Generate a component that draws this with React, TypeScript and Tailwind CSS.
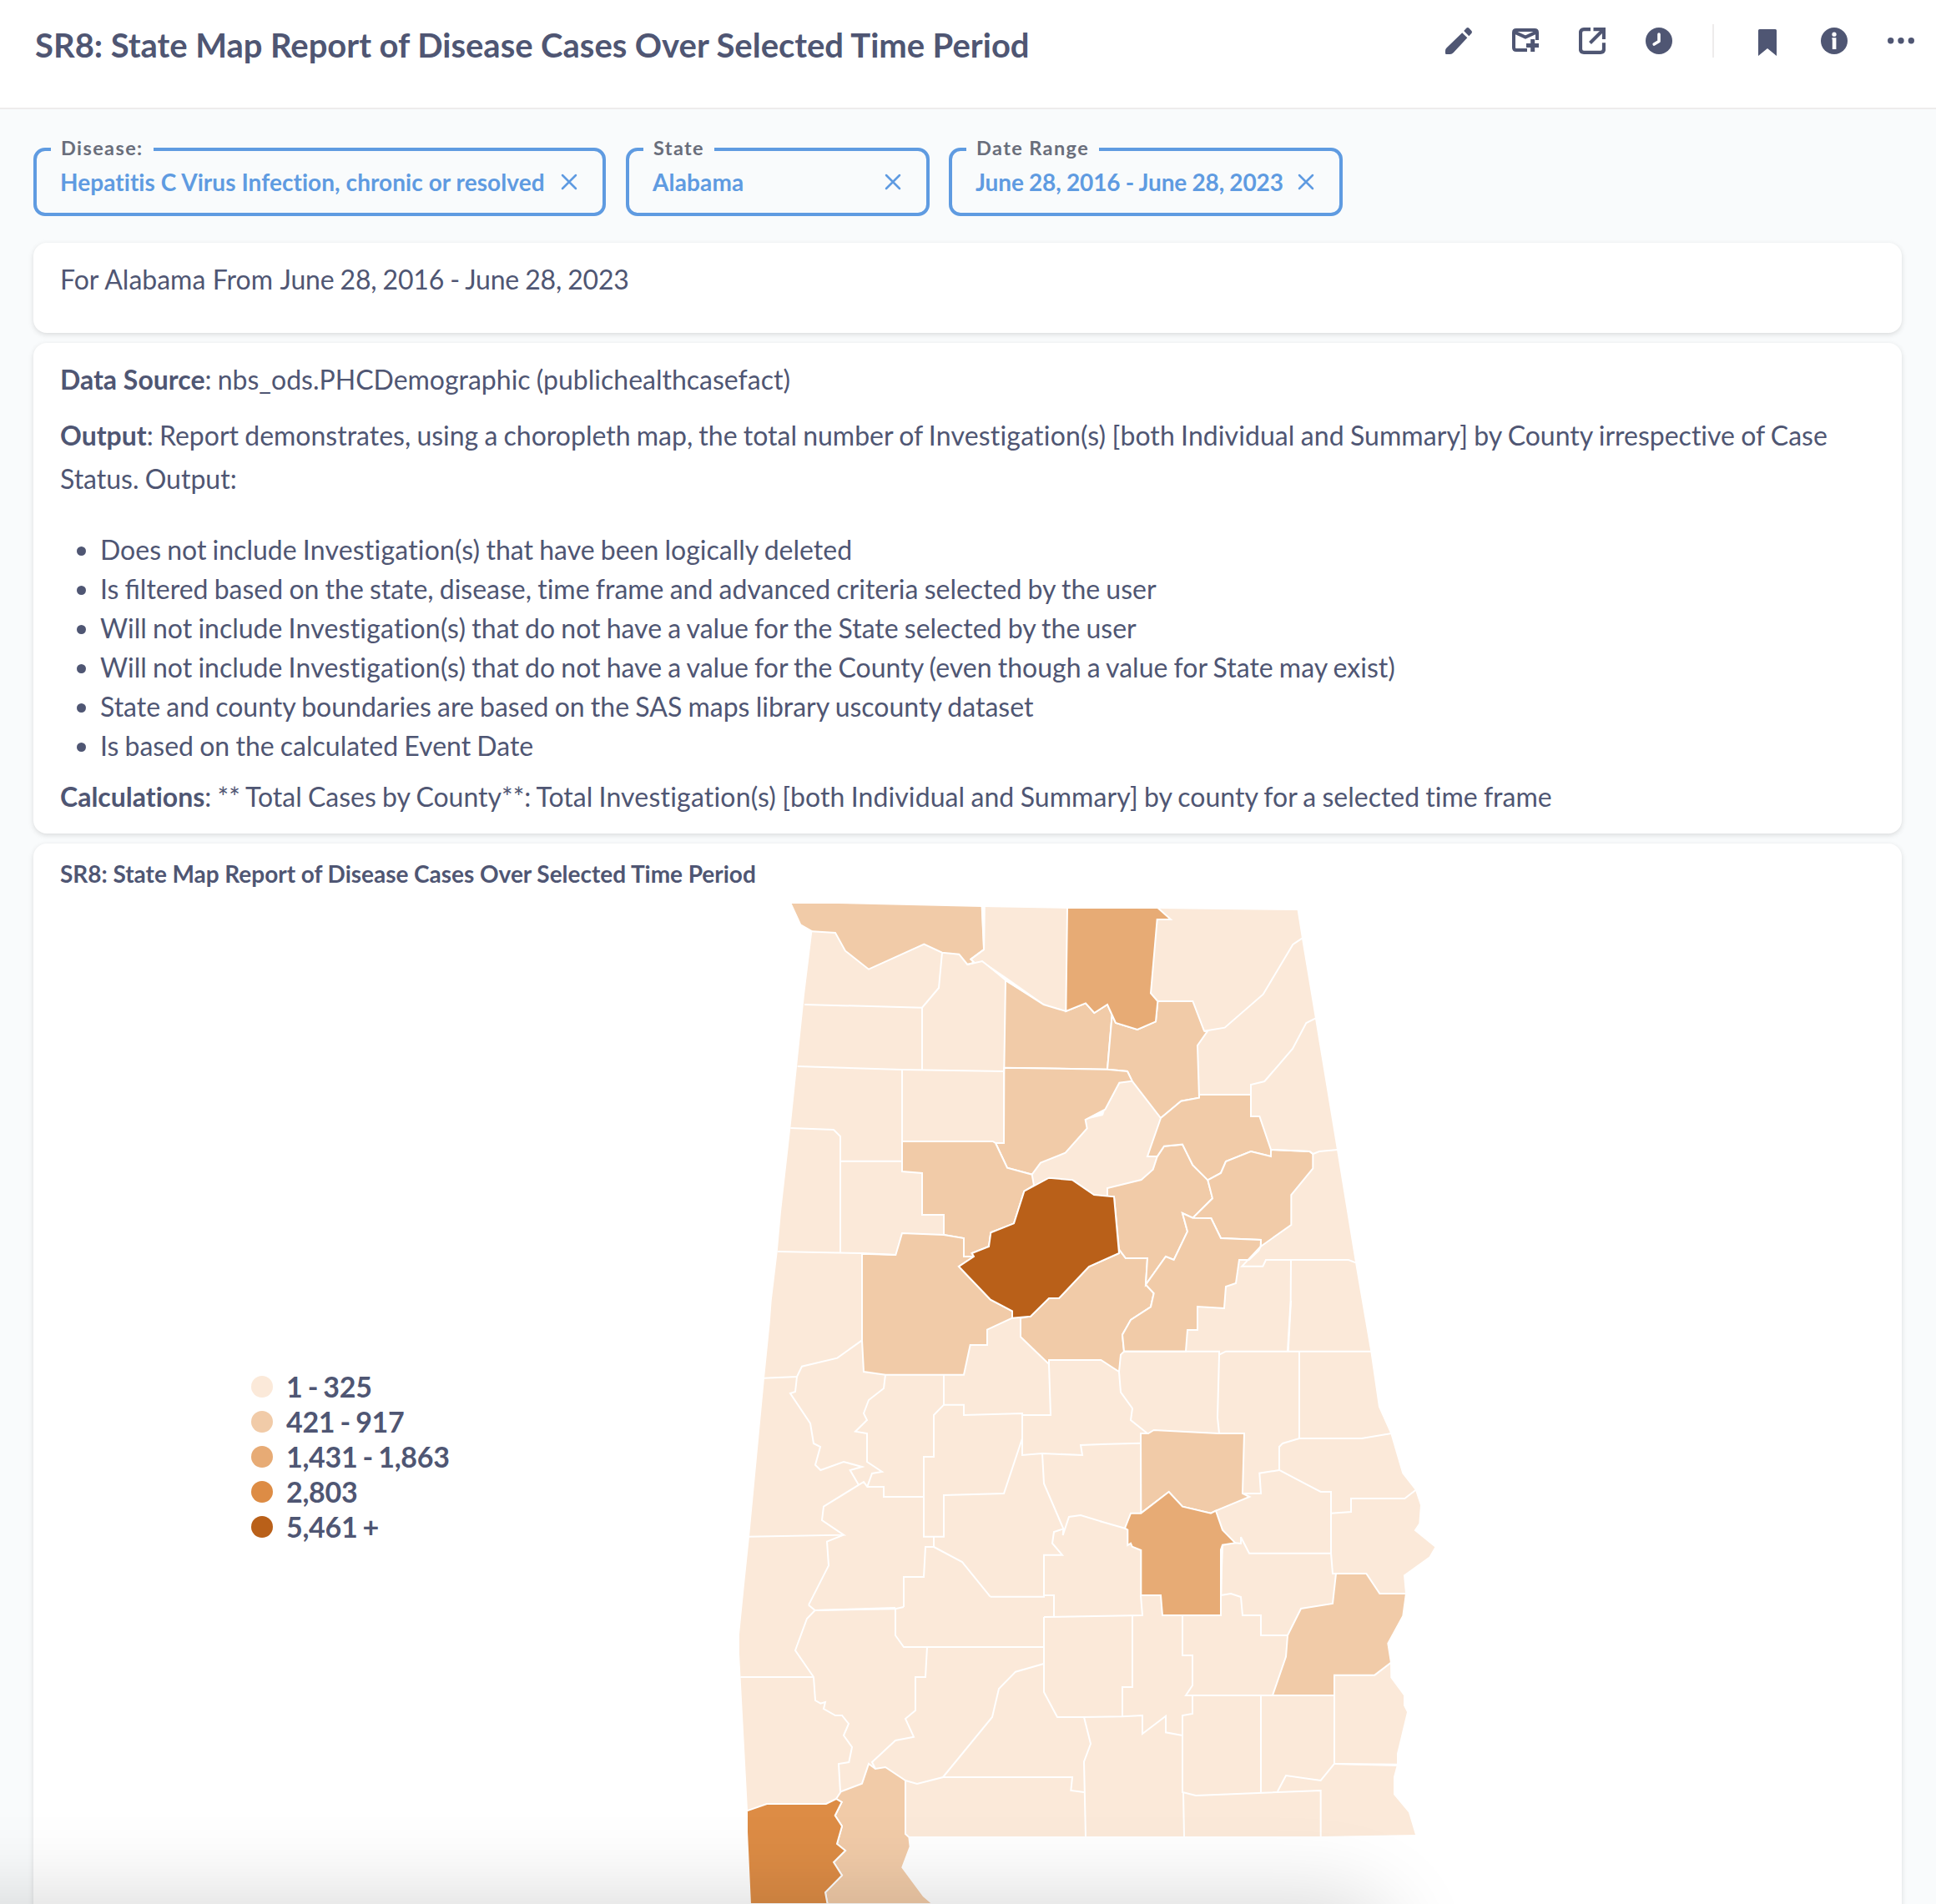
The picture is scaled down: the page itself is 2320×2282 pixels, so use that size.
import React from "react";

const INK = "#4f5673";

const C1 = "#fbe9d9";
const C2 = "#f1cba8";
const C3 = "#e7ab75";
const C4 = "#dd8c45";
const C5 = "#b96019";

/* ---------- map geometry ---------- */

const STATE =
  "236,71 405,72 920,84 1227,90 1552,90 2054,96 2070,197 2118,485 2196,957 2265,1380 2317,1682 2346,1882 2389,1978 2431,2121 2478,2181 2496,2235 2491,2300 2474,2326 2548,2386 2528,2420 2436,2486 2442,2552 2431,2632 2377,2732 2388,2801 2389,2855 2436,2919 2436,2955 2448,2979 2412,3128 2412,3165 2411,3172 2400,3212 2400,3275 2454,3340 2478,3420 2140,3426 656,3426 659,3463 631,3537 707,3640 740,3666 90,3666 78,3410 78,3332 54,2880 48,2770 48,2700 66,2520 84,2348 138,1778 158,1580 164,1500 185,1325 198,1180 234,860 282,400 310,172 270,146";

const COUNTIES: { name: string; fill: string; points: string }[] = [
  { name: "Lauderdale", fill: C2, points: "231,68 405,69 920,81 927,237 880,272 891,284 868,291 838,254 777,248 712,218 513,308 429,242 393,177 310,172 268,148" },
  { name: "Morgan", fill: C2, points: "1005,348 1142,435 1222,459 1293,430 1324,465 1371,435 1388,472 1371,668 1000,662" },
  { name: "Marshall", fill: C2, points: "1388,472 1401,501 1479,525 1545,496 1552,423 1678,423 1719,530 1730,532 1695,582 1701,770 1636,782 1563,843 1460,710 1443,675 1371,668" },
  { name: "Madison", fill: C3, points: "1227,87 1552,87 1599,129 1550,129 1527,394 1552,423 1545,496 1479,525 1401,501 1371,435 1324,465 1293,430 1222,459" },
  { name: "Cullman", fill: C2, points: "1000,662 1371,668 1443,675 1460,710 1414,716 1363,812 1292,849 1298,880 1220,968 1131,1004 1100,1046 1011,1022 969,933 999,933" },
  { name: "Walker", fill: C2, points: "633,927 959,927 969,933 1011,1022 1100,1046 1107,1085 1072,1106 1035,1222 952,1255 945,1305 884,1329 891,1341 855,1341 855,1275 783,1263 783,1191 705,1191 705,1041 633,1035" },
  { name: "Tuscaloosa", fill: C2, points: "633,1257 783,1263 855,1275 855,1341 891,1341 837,1377 951,1496 1029,1537 1029,1562 939,1604 939,1659 878,1659 855,1766 573,1766 495,1755 489,1642 489,1331 610,1335" },
  { name: "Shelby", fill: C2, points: "1413,1329 1305,1377 1197,1491 1161,1491 1095,1556 1059,1562 1059,1630 1161,1728 1161,1713 1348,1713 1413,1755 1419,1694 1431,1682 1425,1622 1455,1569 1527,1522 1538,1473 1509,1442 1515,1347 1437,1347 1413,1315" },
  { name: "St. Clair", fill: C2, points: "1371,1126 1371,1095 1493,1065 1535,1028 1550,982 1575,944 1641,938 1678,1012 1732,1066 1749,1132 1678,1202 1641,1185 1659,1251 1610,1353 1581,1341 1509,1442 1515,1347 1437,1347 1413,1315 1395,1126" },
  { name: "Etowah", fill: C2, points: "1563,843 1636,782 1701,770 1701,759 1887,759 1887,837 1918,837 1959,957 1959,981 1887,963 1797,999 1779,1041 1732,1066 1678,1012 1641,938 1575,944 1550,981 1515,981" },
  { name: "Calhoun", fill: C2, points: "1732,1066 1779,1041 1797,999 1887,963 1959,981 1959,957 2098,963 2110,972 2110,1024 2032,1119 2032,1227 1922,1305 1923,1281 1779,1275 1744,1203 1678,1202 1749,1132" },
  { name: "Talladega", fill: C2, points: "1641,1185 1678,1202 1744,1203 1779,1275 1923,1281 1922,1305 1915,1320 1880,1353 1845,1353 1833,1437 1797,1449 1791,1527 1695,1521 1695,1605 1659,1605 1653,1682 1431,1682 1425,1622 1455,1569 1527,1522 1538,1473 1509,1442 1581,1341 1610,1353 1659,1251" },
  { name: "Jefferson", fill: C5, points: "1161,1058 1246,1066 1323,1119 1395,1126 1413,1329 1305,1377 1197,1491 1161,1491 1095,1556 1029,1562 1029,1537 951,1496 837,1377 891,1341 884,1329 945,1305 952,1255 1035,1222 1072,1106" },
  { name: "Elmore", fill: C2, points: "1491,1977 1518,1977 1538,1965 1770,1977 1863,1977 1857,2193 1882,2205 1761,2255 1743,2264 1641,2240 1592,2187 1492,2264" },
  { name: "Montgomery", fill: C3, points: "1492,2264 1592,2187 1641,2240 1743,2264 1761,2255 1785,2324 1831,2371 1785,2378 1779,2395 1779,2631 1569,2631 1563,2559 1492,2559 1492,2397 1460,2384 1455,2372 1444,2379 1444,2324 1434,2318 1455,2264" },
  { name: "Barbour", fill: C2, points: "2193,2481 2302,2481 2350,2553 2445,2553 2434,2633 2380,2732 2391,2801 2332,2846 2187,2846 2187,2919 1965,2919 2013,2780 2019,2703 2067,2607 2181,2589" },
  { name: "Baldwin", fill: C2, points: "396,3291 413,3265 489,3236 513,3165 537,3183 573,3177 645,3225 645,3417 658,3429 662,3463 634,3537 710,3640 745,3670 365,3670 357,3627 417,3566 387,3519 429,3477 399,3453 417,3389 392,3351 416,3303" },
  { name: "Mobile", fill: C4, points: "75,3334 147,3309 360,3309 396,3291 416,3303 392,3351 417,3389 399,3453 429,3477 387,3519 417,3566 357,3627 365,3670 87,3670 75,3410" },
];

const BORDERS: { region: string; shift: string; lines: string[] }[] = [
  {
    region: "northwest",
    shift: "translate(30 0)",
    lines: [
      "252,435 675,446 735,375 747,248",
      "675,446 675,668",
      "227,657 603,669 969,675",
      "603,669 603,1035",
      "202,879 357,885 381,909 381,1326",
      "381,998 603,998",
      "155,1323 460,1329 580,1335",
      "970,662 969,675 969,933",
      "838,291 891,279 975,345",
      "899,84 897,237 850,272 864,285",
    ],
  },
  {
    region: "northeast",
    shift: "translate(1290 0)",
    lines: [
      "782,196 748,219 641,398 503,518 429,530",
      "830,484 796,501 747,594 646,711 597,723 597,759",
      "669,957 808,963 820,972 843,963 908,957",
      "632,1305 565,1376 640,1376 651,1353 948,1353 974,1363",
      "555,1353 590,1353",
    ],
  },
  {
    region: "west central",
    shift: "translate(30 1320)",
    lines: [
      "106,458 225,453 243,416 370,386 459,322",
      "225,453 219,507 201,513 273,621 285,693 309,705 291,770 310,789 393,759 459,777 416,789 447,842",
      "543,446 537,495 483,537 465,585 477,609 435,650 477,657 477,759 531,795 495,801 478,848",
      "52,1028 393,1022 315,969 321,920 465,831 478,849 537,849 537,885 681,885",
      "753,446 753,554 717,591 717,741 681,741 681,1028 753,1028 753,879 969,873 1035,675",
      "753,554 825,554 825,591 1035,585 1035,735 1107,729 1251,735 1245,699 1322,696",
      "1035,591 1137,591 1131,408",
      "1107,729 1113,837 1183,1000 1181,1023 1203,957 1245,951 1320,974",
      "1183,1000 1149,1011 1143,1052 1179,1094 1113,1094 1113,1243",
      "393,1022 333,1046 339,1132 267,1274",
      "717,1028 717,1065 687,1065 681,1173 609,1173 609,1281",
      "717,1065 819,1119 920,1244",
    ],
  },
  {
    region: "east central",
    shift: "translate(1290 1320)",
    lines: [
      "741,33 740,180 729,362",
      "741,180 731,362",
      "141,362 483,362 483,374 507,362 1029,362",
      "483,374 477,600 483,657",
      "771,362 771,675",
      "1102,657 995,675 771,675 711,693 699,705 699,789 848,867 885,867 885,1088 891,1161 903,1161",
      "699,789 628,800 633,873 567,873",
      "1190,860 1150,891 957,891 957,939 885,944",
      "123,435 129,509 171,567 165,609 225,657",
      "55,696 201,692",
      "541,1051 561,1053 561,1030 591,1088 885,1088",
      "55,973 144,998",
      "495,1058 492,1140",
    ],
  },
  {
    region: "southwest",
    shift: "translate(0 2460)",
    lines: [
      "297,134 320,153 609,148 639,141",
      "320,153 609,144",
      "320,153 291,183 249,297 315,393 321,477 340,488 357,483 351,507 393,531 417,531 441,561 423,603 453,645 442,699 405,705 411,806",
      "52,393 315,393",
      "609,148 609,243 639,285 1143,285",
      "723,285 717,393 681,393 681,513 645,543 675,608 609,621 525,699 537,723",
      "950,104 1143,104 1143,99 1179,99 1179,176",
      "1143,99 1143,104",
      "1143,177 1143,447 1191,537 1290,537",
      "1143,345 1041,374 981,435 957,537 780,753 687,777 645,765",
      "780,753 1245,753 1240,801 1287,807",
      "1287,537 1311,633 1287,697 1293,968",
    ],
  },
  {
    region: "southeast",
    shift: "translate(1290 2460)",
    lines: [
      "-147,177 207,171 201,99",
      "171,173 171,429 135,429 135,536",
      "-5,537 135,535 207,531 207,597 291,533 291,592 351,603",
      "351,171 351,315 387,315 387,423 363,459 675,459",
      "387,459 387,525 351,531 351,807 399,819 848,801 848,968",
      "354,807 357,968",
      "633,459 633,807",
      "897,459 897,705 848,765 723,747 693,804",
      "897,705 1125,707",
      "897,705 1125,711",
      "489,99 525,93 561,105 567,171 633,171 633,243 729,243",
      "492,0 490,99",
    ],
  },
];

/* Thin gaps between simplified county outlines */
const GAPS = [
  "919,82 930,82 929,237 926,237",
  "921,279 1008,338 1142,433 1005,350",
  "1295,847 1355,833 1361,813",
];

function AlabamaMap() {
  return (
    <svg width="866" height="1222" viewBox="0 0 2598 3666" className="block shrink-0">
      <polygon points={STATE} fill={C1} />
      {COUNTIES.map((c) => (
        <polygon key={c.name} points={c.points} fill={c.fill} stroke="#fff" strokeWidth="6" />
      ))}
      {BORDERS.map((b) => (
        <g key={b.region} transform={b.shift} fill="none" stroke="#fff" strokeWidth="6">
          {b.lines.map((l) => (
            <polyline key={l} points={l} />
          ))}
        </g>
      ))}
      {GAPS.map((g) => (
        <polygon key={g} points={g} fill="#fff" stroke="#fff" strokeWidth="2" />
      ))}
    </svg>
  );
}

/* ---------- header ---------- */

function HeaderIcons() {
  return (
    <div className="flex items-start pt-[33px] text-[#4f5673]">
      <svg width="32" height="32" viewBox="0 0 32 32" fill={INK}>
        <path d="M20.200 6.300 26.300 12.200 9.800 30Q8 32 5.800 32H1.200Q0 32 0 30.800V28Q0 26 1.400 24.600Z" />
        <path d="M22.200 4 25.200.800Q26.800-.600 28.400.800L31.200 3.800Q32.600 5.400 31.300 7L28.300 10.200Z" />
      </svg>
      <svg width="34" height="32" viewBox="0 0 34 32" className="ml-[47px]" fill="none" stroke={INK}>
        <path d="M31 15V6Q31 3 28 3H6Q3 3 3 6V24Q3 27 6 27H19" strokeWidth="4" />
        <path d="M3.500 5.400 17 11.600 30.500 5.400" strokeWidth="4" />
        <path d="M25.700 14V29M18 21.400H33" strokeWidth="5" />
      </svg>
      <svg width="32" height="32" viewBox="0 0 32 32" className="ml-[47px]" fill="none" stroke={INK}>
        <path d="M14 2.200H6Q2 2.200 2 6.200V25.800Q2 29.800 6 29.800H26Q30 29.800 30 25.800V18.200" strokeWidth="4.200" />
        <path d="M17.500 2.200H30V14" strokeWidth="4.200" />
        <path d="M13.500 18.500 28.500 3.500" strokeWidth="4" />
      </svg>
      <svg width="32" height="32" viewBox="0 0 32 32" className="ml-12">
        <circle cx="16" cy="16" r="16" fill={INK} />
        <path d="M16 8V16.500L10.200 20" fill="none" stroke="#fff" strokeWidth="3.600" strokeLinecap="round" strokeLinejoin="round" />
      </svg>
      <div className="-mt-1 ml-12 h-10 w-0.5 bg-[#eeecec]" />
      <svg width="22" height="34" viewBox="0 0 22 34" className="ml-[53px]" fill={INK}>
        <path d="M1.500 2H20.500Q22 2 22 3.500V34L11 25 0 34V3.500Q0 2 1.500 2Z" />
      </svg>
      <svg width="32" height="32" viewBox="0 0 32 32" className="ml-[53px]">
        <circle cx="16" cy="16" r="16" fill={INK} />
        <circle cx="16" cy="8.200" r="2.600" fill="#fff" />
        <path d="M13.400 12.200H18.400V26H13.800V14.200H13.400Z" fill="#fff" />
      </svg>
      <svg width="32" height="32" viewBox="0 0 32 32" className="ml-12" fill={INK}>
        <circle cx="3.700" cy="15.700" r="3.700" />
        <circle cx="16" cy="15.700" r="3.700" />
        <circle cx="28.300" cy="15.700" r="3.700" />
      </svg>
    </div>
  );
}

/* ---------- filters ---------- */

function Filter({ label, value, box, text }: { label: string; value: string; box: string; text: string }) {
  return (
    <div className={`relative h-[82px] rounded-[14px] border-4 border-[#5f9be1] pl-7 pr-[30px] ${box}`}>
      <div className="absolute -top-[17px] left-[17px] flex h-7 items-center bg-[#f9fbfc] px-3 text-[23.500px] font-bold tracking-[1.400px] text-[#696e7b]">
        {label}
      </div>
      <div className="flex h-[74px] items-center justify-between">
        <span className={`whitespace-nowrap text-[28px] font-bold leading-[34px] text-[#5f9be1] ${text}`}>{value}</span>
        <svg width="20" height="20" viewBox="0 0 20 20" className="shrink-0" stroke="#5f9be1" strokeWidth="2.500" strokeLinecap="round">
          <path d="M2 2 18 18M18 2 2 18" />
        </svg>
      </div>
    </div>
  );
}

const card = "rounded-2xl bg-white shadow-[0_2px_6px_rgba(0,0,0,0.13)]";

const Investigations = () => <span className="tracking-[0.200px]">Investigation(s)</span>;

const NOTES: React.ReactNode[] = [
  <>
    Does not include <Investigations /> that have been logically deleted
  </>,
  <>
    Is <span className="[font-variant-ligatures:normal]">filtered</span> based on the state, disease, time frame and
    advanced criteria selected by the user
  </>,
  <>
    Will not include <Investigations /> that do not have a value for the State selected by the user
  </>,
  <>
    Will not include <Investigations /> that do not have a value for the County (even though a value for State may
    exist)
  </>,
  "State and county boundaries are based on the SAS maps library uscounty dataset",
  "Is based on the calculated Event Date",
];

const LEGEND = [
  { dot: "bg-[#fbe9d9]", text: "1 - 325" },
  { dot: "bg-[#f1cba8]", text: "421 - 917" },
  { dot: "bg-[#e7ab75]", text: "1,431 - 1,863" },
  { dot: "bg-[#dd8c45]", text: "2,803" },
  { dot: "bg-[#b96019]", text: "5,461 +" },
];

export default function App() {
  return (
    <div className="relative h-[2282px] w-[2320px] overflow-hidden bg-[#f9fbfc] font-['Lato',sans-serif] text-[#4f5673] [font-variant-ligatures:none]">
      <header className="flex h-[131px] justify-between border-b-2 border-[#eeecec] bg-white pl-[42px] pr-[26px]">
        <h1 className="pt-[30px] text-[40px] font-bold leading-[48px] [word-spacing:-0.250px]">
          SR8: State Map Report of Disease Cases Over Selected Time Period
        </h1>
        <HeaderIcons />
      </header>

      <div className="flex pl-10 pt-[46px]">
        <Filter
          label="Disease:"
          value="Hepatitis C Virus Infection, chronic or resolved"
          box="w-[686px]"
          text="tracking-[0.060px]"
        />
        <Filter label="State" value="Alabama" box="ml-6 w-[364px]" text="tracking-[0.150px]" />
        <Filter
          label="Date Range"
          value="June 28, 2016 - June 28, 2023"
          box="ml-[23px] w-[472px]"
          text="tracking-[-0.100px] [word-spacing:-0.500px]"
        />
      </div>

      <main className="ml-10 mt-8 flex w-[2239px] flex-col gap-3">
        <section className={`h-[108px] px-8 pt-[18px] text-[32px] leading-[52px] [word-spacing:0.300px] ${card}`}>
          For Alabama From{" "}
          <span className="tracking-[-0.200px] [word-spacing:-0.800px]">June 28, 2016 - June 28, 2023</span>
        </section>

        <section className={`h-[588px] px-8 pt-[18px] text-[32px] leading-[52px] [word-spacing:-1px] ${card}`}>
          <p>
            <b className="[word-spacing:0px]">Data Source</b>: nbs_ods.PHCDemographic (publichealthcasefact)
          </p>
          <p className="mt-[15px]">
            <b>Output</b>: Report demonstrates, using a choropleth map, the total number of <Investigations />{" "}
            <span className="tracking-[0.080px]">[both Individual and Summary]</span> by County irrespective of Case
            Status. Output:
          </p>
          <ul className="mt-[35px] list-disc pl-12 leading-[47px]">
            {NOTES.map((n, i) => (
              <li key={i}>{n}</li>
            ))}
          </ul>
          <p className="mt-3">
            <b>Calculations</b>: ** Total Cases by County**: Total <Investigations />{" "}
            <span className="tracking-[0.080px]">[both Individual and Summary]</span> by county for a selected time
            frame
          </p>
        </section>

        <section className={`h-[1400px] px-8 pt-[19px] ${card}`}>
          <h2 className="text-[28px] font-bold leading-[34px] [word-spacing:-0.200px]">
            SR8: State Map Report of Disease Cases Over Selected Time Period
          </h2>
          <div className="-mt-[5px] flex">
            <div className="w-[798px] pl-[229px] pt-[582px]">
              {LEGEND.map((l) => (
                <div key={l.text} className="flex h-[42px] items-center gap-4">
                  <span className={`size-[26px] rounded-full ${l.dot}`} />
                  <span className="text-[34px] font-bold leading-[42px] tracking-[-0.300px] [word-spacing:-1.700px]">
                    {l.text}
                  </span>
                </div>
              ))}
            </div>
            <AlabamaMap />
          </div>
        </section>
      </main>

      <div className="pointer-events-none absolute -left-40 top-[2302px] h-20 w-[1800px] rounded-[40px] shadow-[0_0_100px_30px_rgba(0,0,0,0.15)]" />
    </div>
  );
}
